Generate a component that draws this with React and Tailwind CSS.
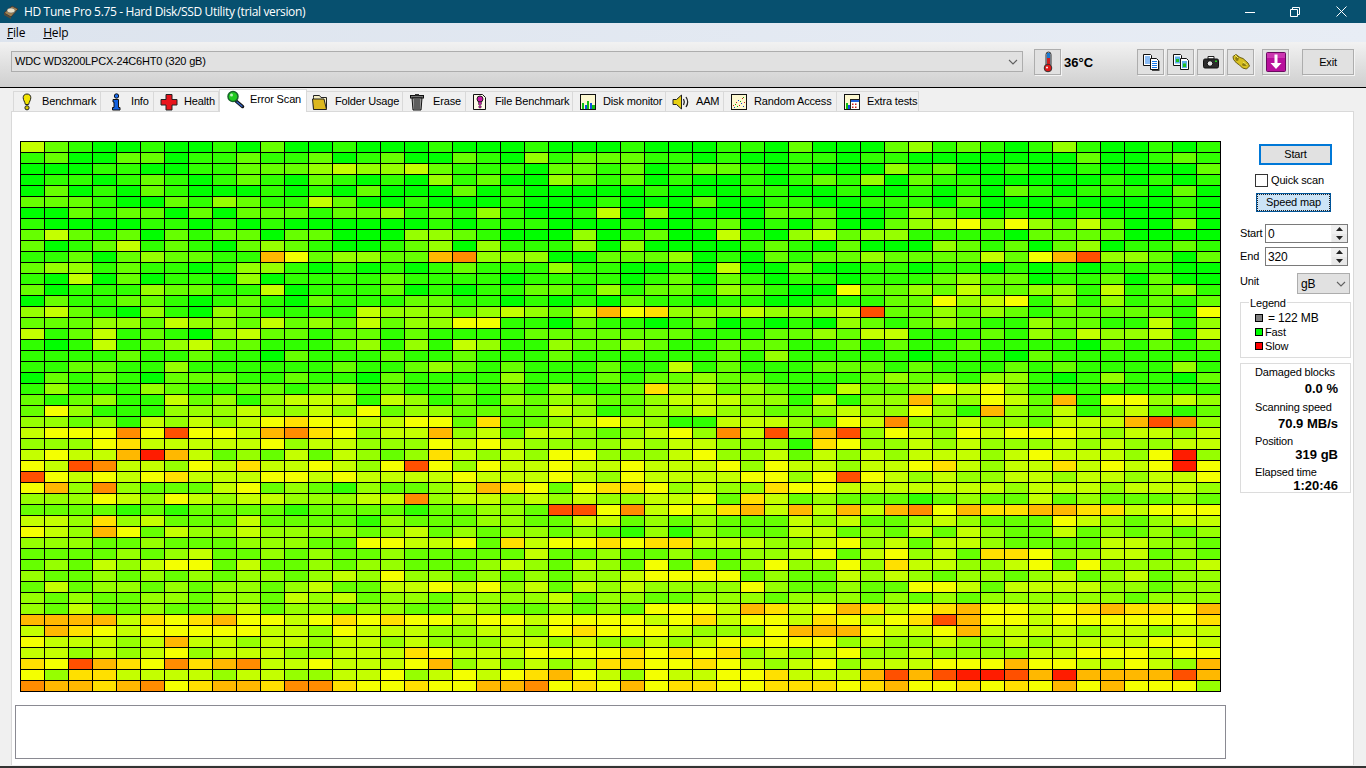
const ROWS = [
"42100100102001000100010001000110200023121013100101",
"12002201121120120021031222110100110110000000200121",
"00011001122234334211102212012210100031200100100002",
"01101210121021010312003212010010121302110000010101",
"02010210001010200020100000100011001001010210111020",
"22210021321142001000100010002001100111020001000010",
"00212202022212231213100140300002220013210100100010",
"10000110101000000101110001001201020023453532420030",
"24212021220220003321000301200410342331111022220000",
"20124121023210012303111303000012102000321202301121",
"11202322117523322783330022230102122322224257933202",
"23312110133101010121113110010400200110110101011100",
"10402011030111121111011110120210110111232201120200",
"20111322114011120101122131221321005223242233141231",
"02112210121021112211010102110110011122534513131212",
"34210310321111433323432475633343334922323212222215",
"22233243324232423355110211012010103212321132211413",
"41241210342212212111122222221112232441112132433414",
"10141234221112313143113223211222112121121111021212",
"11112112110211121121112111111213111110111021111111",
"11221131111112112321211121141211122212111212111131",
"02121022211211021111311121223221111232213310131102",
"13111321122123121121213112634232114223545311111111",
"21231142313444143121323322344433141337335427155343",
"25311133343343523322224312334332234335317324134212",
"33231434345655445526223454311444325483343324447983",
"45558595547865344734244323453849379354354555434434",
"33356444445344333545433334344333165334343334343344",
"45447a742324243236434355333453342434344434544435a3",
"549844354644543595354454454445354434456434464545a5",
"95454564445545444454445435444455359543433443443445",
"57383222452321322347652566534336554444444344434443",
"33354354344333448344343433445264232221232242322232",
"22221212222122221223329958454674747478576677664555",
"44363422242222132223322442323222434223432225432344",
"54375243343333234232332321313222442324243224232323",
"33322322233322554452645565664443345342443222244332",
"22223234223232232222242232232233452453426653344232",
"23243455242232332223432432526235335364433452533334",
"32232323233234353323232334555523224343233234234233",
"24233232332342244545342434333353223225542444433233",
"32322332332434233233334233223332333232323333332333",
"32422322342332332243223232555476457645675545676657",
"77774656755456565545545555456455465456975545555556",
"47654555554435444334435655543335777544574444344344",
"54443474434434434333443433434555553433433434444554",
"44343453444334446544455556565634345334333344555455",
"65976586784454445734343466556543453444555755445437",
"5366444434433445345456754" + "35445564447979aa97a777797",
"87767856776886556557785657566556665675565657575553",
];

const HEAT = {
  0: "bg-[#00ff00]", 1: "bg-[#30ff00]", 2: "bg-[#66ff00]", 3: "bg-[#96ff00]",
  4: "bg-[#c4ff00]", 5: "bg-[#f4ff00]", 6: "bg-[#ffe000]", 7: "bg-[#ffb800]",
  8: "bg-[#ff8c00]", 9: "bg-[#ff5000]", a: "bg-[#ff1c00]",
};

const Ui = "font-['Liberation_Sans',sans-serif]";

const Bulb = () => (
  <svg width="18" height="18" viewBox="0 0 18 18">
    <path d="M9 1C6.500 1 5.200 2.500 5.200 4.700c0 2.300 1.600 4 2.200 6.800h3.200c.6-2.800 2.200-4.500 2.200-6.800C12.800 2.500 11.500 1 9 1z" fill="#f2e400" stroke="#222" />
    <circle cx="9" cy="14.800" r="2.100" fill="#d8c800" stroke="#222" />
  </svg>
);
const InfoI = () => (
  <svg width="18" height="18" viewBox="0 0 18 18">
    <circle cx="9.500" cy="3" r="2.200" fill="#1a6cf0" stroke="#111" />
    <path d="M6 6.500h5.500v8H13V17H5.500v-2.500H7V9H6z" fill="#1060e0" stroke="#111" />
  </svg>
);
const Cross = () => (
  <svg width="18" height="18" viewBox="0 0 18 18">
    <path d="M6 1.500h6v5h5v5.500h-5v5H6v-5H1V6.500h5z" fill="#e8141c" stroke="#222" />
  </svg>
);
const Lens = () => (
  <svg width="20" height="20" viewBox="0 0 20 20">
    <path d="M10 11l6.500 5.500" stroke="#111" strokeWidth="3.500" strokeLinecap="round" />
    <path d="M11 12l5 4.200" stroke="#3060c0" strokeWidth="1.500" strokeLinecap="round" />
    <circle cx="7" cy="6.500" r="5" fill="#20cc20" stroke="#17632a" strokeWidth="1.500" />
    <circle cx="5.500" cy="5" r="1.500" fill="#b8f4b8" />
  </svg>
);
const Folder = () => (
  <svg width="18" height="18" viewBox="0 0 18 18">
    <path d="M2.500 4.500V2.500h6l1.500 2h5.500V15.500H2.500z" fill="#f3ecc0" stroke="#222" />
    <path d="M1.500 6H13l2.500 10.500H2.500z" fill="#dcb81e" stroke="#222" />
  </svg>
);
const Trash = () => (
  <svg width="18" height="18" viewBox="0 0 18 18">
    <rect x="2.500" y="2.500" width="13" height="2.500" fill="#777" stroke="#111" />
    <rect x="7" y="1" width="4" height="1.500" fill="#333" />
    <path d="M4 5h10l-1 12H5z" fill="#9a9a9a" stroke="#111" />
    <path d="M7 6v10M9 6v10M11 6v10" stroke="#222" />
  </svg>
);
const DocMark = () => (
  <svg width="18" height="18" viewBox="0 0 18 18">
    <path d="M2.500 1.500h9l3 3v12h-12z" fill="#fdfbe8" stroke="#111" />
    <circle cx="9" cy="6" r="3" fill="#c818a8" stroke="#222" />
    <rect x="7.500" y="9" width="3" height="2.500" fill="#c818a8" stroke="#222" strokeWidth=".500" />
    <circle cx="9" cy="13.800" r="1.300" fill="#c818a8" stroke="#222" strokeWidth=".500" />
  </svg>
);
const Monitor = () => (
  <svg width="18" height="18" viewBox="0 0 18 18">
    <rect x="1.500" y="1.500" width="15" height="15" fill="#fdf8d0" stroke="#111" />
    <path d="M3 10h2v6H3z" fill="#10c010" />
    <path d="M6 12h2v4H6z" fill="#1050e0" />
    <path d="M8 8h2v8H8z" fill="#10c010" />
    <path d="M11 10h2v6h-2z" fill="#1050e0" />
    <path d="M13 12h3v4h-3z" fill="#10c010" />
  </svg>
);
const Speaker = () => (
  <svg width="20" height="18" viewBox="0 0 20 18">
    <path d="M2 6.500h3.500L10.500 2v14l-5-4.500H2z" fill="#e8d010" stroke="#222" />
    <path d="M12.500 6c1 1.800 1 4.200 0 6M15 4c2 3 2 7 0 10" fill="none" stroke="#222" strokeWidth="1.300" />
  </svg>
);
const Dots = () => (
  <svg width="18" height="18" viewBox="0 0 18 18">
    <rect x="1.500" y="1.500" width="15" height="15" fill="#fdf8d0" stroke="#111" />
    <g fill="#d01818">
      <rect x="3" y="12" width="1" height="1" /><rect x="6" y="9" width="1" height="1" /><rect x="9" y="12" width="1" height="1" /><rect x="12" y="5" width="1" height="1" /><rect x="14" y="9" width="1" height="1" />
    </g>
    <g fill="#1040d0">
      <rect x="4" y="14" width="1" height="1" /><rect x="8" y="7" width="1" height="1" /><rect x="11" y="10" width="1" height="1" /><rect x="13" y="13" width="1" height="1" />
    </g>
    <g fill="#10a010">
      <rect x="5" y="11" width="1" height="1" /><rect x="10" y="8" width="1" height="1" /><rect x="13" y="4" width="1" height="1" /><rect x="7" y="13" width="1" height="1" />
    </g>
  </svg>
);
const Extra = () => (
  <svg width="18" height="18" viewBox="0 0 18 18">
    <rect x="1.500" y="1.500" width="15" height="15" fill="#fdf8d0" stroke="#111" />
    <path d="M3 10h2v6H3z" fill="#10c010" />
    <path d="M5 12h2v4H5z" fill="#1050e0" />
    <rect x="7.500" y="6.500" width="9" height="10" fill="#fff" stroke="#222" />
    <rect x="8" y="7" width="8" height="2" fill="#2060e0" />
    <g fill="#d02020"><rect x="9" y="10.500" width="1.500" height="1.500" /><rect x="12" y="10.500" width="1.500" height="1.500" /><rect x="9" y="13.500" width="1.500" height="1.500" /><rect x="12" y="13.500" width="1.500" height="1.500" /></g>
  </svg>
);
const Thermo = () => (
  <svg width="18" height="22" viewBox="0 0 18 22">
    <rect x="7" y="1" width="5" height="15" rx="2.500" fill="#b8c8d8" stroke="#333" />
    <rect x="8" y="2" width="3" height="5" fill="#1878d0" />
    <rect x="8" y="7" width="3" height="9" fill="#d02020" />
    <circle cx="9" cy="17" r="3.800" fill="#e01818" stroke="#333" />
    <circle cx="8" cy="16.500" r="1" fill="#fff" />
  </svg>
);
const CopyText = () => (
  <svg width="18" height="18" viewBox="0 0 18 18">
    <path d="M1.500 1.500h7l1 1v10h-8z" fill="#fff" stroke="#111" />
    <path d="M3 4h5M3 6h5M3 8h5M3 10h5" stroke="#1878e8" />
    <path d="M9 6h6l1.500 1.500v9.500H9z" fill="#444" transform="translate(1 1)" />
    <path d="M8.500 5.500h6l2 2v9h-8z" fill="#fff" stroke="#111" />
    <path d="M10 8.500h5M10 10.500h5M10 12.500h5M10 14.500h5" stroke="#1878e8" />
  </svg>
);
const CopyImg = () => (
  <svg width="18" height="18" viewBox="0 0 18 18">
    <path d="M1.500 1.500h7l1 1v10h-8z" fill="#fff" stroke="#111" />
    <rect x="3" y="3.500" width="5" height="7" fill="#60b0e8" />
    <rect x="4" y="6" width="3" height="3" fill="#20c020" />
    <path d="M8.500 5.500h6l2 2v9h-8z" fill="#fff" stroke="#111" />
    <rect x="10" y="8" width="5" height="7" fill="#60b0e8" />
    <rect x="11" y="10.500" width="3" height="3.500" fill="#20c020" />
  </svg>
);
const Camera = () => (
  <svg width="18" height="18" viewBox="0 0 18 18">
    <path d="M6 3.500h6v2.500H6z" fill="#fff" stroke="#222" />
    <rect x="1.500" y="6" width="15" height="9" rx="1.500" fill="#2c2c2c" stroke="#111" />
    <circle cx="8" cy="10.500" r="2.800" fill="#e8e8e8" stroke="#111" />
    <rect x="13" y="7.500" width="2" height="1.500" fill="#20d020" />
  </svg>
);
const Keys = () => (
  <svg width="20" height="18" viewBox="0 0 20 18">
    <path d="M2 3.500l3-2 4 3 3 1 5 4.500 1.500 3-3 3-4-1-3-3-3-2-3-3.500z" fill="#d8c020" stroke="#6a5c10" />
    <ellipse cx="6" cy="5.500" rx="1.700" ry="2.500" fill="#8a7a10" />
    <ellipse cx="13.500" cy="11.500" rx="2.500" ry="1.500" fill="#8a7a10" />
    <path d="M4 2l3 3M12 9l4 3" stroke="#f4e860" />
  </svg>
);
const Download = () => (
  <svg width="20" height="20" viewBox="0 0 20 20">
    <rect x=".500" y=".500" width="19" height="19" rx="1" fill="#b8109c" stroke="#6a0a60" />
    <path d="M1 1h18v5H1z" fill="#d850c0" opacity=".600" />
    <path d="M8.500 2.500h3v8.500h4L10 17 4.500 11h4z" fill="#fff" />
  </svg>
);
const AppIcon = () => (
  <svg width="16" height="16" viewBox="0 0 16 16">
    <path d="M1 9l8-7 6 3-7 8z" fill="#a08050" stroke="#3a3a3a" />
    <ellipse cx="8" cy="6.500" rx="4" ry="2.500" fill="#e8e0c8" stroke="#555" strokeWidth=".500" />
    <path d="M1 9l7 4v2l-7-4z" fill="#554a3a" />
  </svg>
);

const TABS = [
  { label: "Benchmark", icon: <Bulb />, c: "w-[88px] pl-[4px]", iw: "w-[24px]" },
  { label: "Info", icon: <InfoI />, c: "w-[53px] pl-[6px]", iw: "w-[24px]" },
  { label: "Health", icon: <Cross />, c: "w-[65px] pl-[6px]", iw: "w-[24px]" },
  { label: "Error Scan", icon: <Lens />, c: "w-[88px] pl-[6px]", iw: "w-[24px]", active: true },
  { label: "Folder Usage", icon: <Folder />, c: "w-[96px] pl-[4px]", iw: "w-[24px]" },
  { label: "Erase", icon: <Trash />, c: "w-[63px] pl-[5px]", iw: "w-[25px]" },
  { label: "File Benchmark", icon: <DocMark />, c: "w-[107px] pl-[5px]", iw: "w-[24px]" },
  { label: "Disk monitor", icon: <Monitor />, c: "w-[93px] pl-[6px]", iw: "w-[24px]" },
  { label: "AAM", icon: <Speaker />, c: "w-[58px] pl-[5px]", iw: "w-[25px]" },
  { label: "Random Access", icon: <Dots />, c: "w-[113px] pl-[6px]", iw: "w-[24px]" },
  { label: "Extra tests", icon: <Extra />, c: "w-[82px] pl-[6px]", iw: "w-[24px]" },
];

function ToolBtn({ children, className = "" }) {
  return (
    <div className={`mt-[7px] flex h-[26px] w-[27px] items-center justify-center border border-[#adadad] bg-[#e1e1e1] shadow-[1px_1px_0_#f4f4f4] ${className}`}>
      {children}
    </div>
  );
}

function Spin({ label, value, className }) {
  return (
    <div className={`ml-[12px] flex h-[19px] w-[108px] items-center ${className}`}>
      <span className="-mt-[2px] w-[25px] leading-[14px]">{label}</span>
      <div className="flex h-[19px] w-[83px] border border-[#7a7a7a] bg-white">
        <span className="flex-1 pl-[2px] text-[12px] leading-[19px]">{value}</span>
        <div className="flex w-[16px] flex-col border-l border-[#f0f0f0] bg-[#f0f0f0]">
          <div className="flex h-[8px] items-center justify-center">
            <svg width="7" height="4" viewBox="0 0 7 4"><path d="M3.500 0L7 4H0z" fill="#222" /></svg>
          </div>
          <div className="mt-[1px] flex h-[8px] items-center justify-center bg-[#e8e8e8]">
            <svg width="7" height="4" viewBox="0 0 7 4"><path d="M0 0h7L3.500 4z" fill="#222" /></svg>
          </div>
        </div>
      </div>
    </div>
  );
}

const Chevron = () => (
  <svg width="10" height="6" viewBox="0 0 10 6"><path d="M1 1l4 4 4-4" fill="none" stroke="#606060" strokeWidth="1.100" /></svg>
);

export default function App() {
  return (
    <div className={`${Ui} flex h-[768px] w-[1366px] flex-col overflow-hidden bg-[#f0f0f0] text-[11px] tracking-[-0.15px] text-black`}>
      {/* title bar */}
      <div className="flex h-[23px] items-center bg-[#07506f] text-white">
        <div className="ml-[3px] w-[21px]"><AppIcon /></div>
        <span className="font-['Open_Sans',sans-serif] text-[12px] tracking-[-0.35px]">HD Tune Pro 5.75 - Hard Disk/SSD Utility (trial version)</span>
        <div className="ml-auto flex h-[23px] items-center">
          <svg className="mr-[35px]" width="10" height="10" viewBox="0 0 10 10"><path d="M0 5.500h10" stroke="#fff" /></svg>
          <svg className="mr-[36px]" width="10" height="10" viewBox="0 0 10 10"><path d="M.500 2.500h7v7h-7zM2.500 2.500v-2h7v7h-2" fill="none" stroke="#fff" /></svg>
          <svg className="mr-[19px]" width="11" height="11" viewBox="0 0 11 11"><path d="M.500.500l10 10M10.500.500l-10 10" stroke="#fff" /></svg>
        </div>
      </div>
      {/* menu */}
      <div className="flex h-[19px] items-center gap-[18px] bg-gradient-to-r from-[#dde4ee] to-[#e8edf5] pl-[7px] font-['Open_Sans',sans-serif] text-[12px] tracking-[-0.2px]">
        <span><span className="underline">F</span>ile</span>
        <span><span className="underline">H</span>elp</span>
      </div>
      {/* toolbar */}
      <div className="flex h-[45px] items-start bg-gradient-to-b from-[#f2f2f2] to-[#cfcfcf]">
        <div className="ml-[11px] mt-[9px] flex h-[21px] w-[1012px] items-center border border-[#adadad] bg-[#e1e1e1] pl-[3px] pr-[4px]">
          <span className="flex-1 tracking-[-0.2px]">WDC WD3200LPCX-24C6HT0 (320 gB)</span>
          <Chevron />
        </div>
        <ToolBtn className="ml-[11px]"><Thermo /></ToolBtn>
        <span className="ml-[3px] mt-[13px] w-[73px] text-[13px] font-bold leading-[15px] tracking-normal">36°C</span>
        <ToolBtn><CopyText /></ToolBtn>
        <ToolBtn className="ml-[3px]"><CopyImg /></ToolBtn>
        <ToolBtn className="ml-[3px]"><Camera /></ToolBtn>
        <ToolBtn className="ml-[3px]"><Keys /></ToolBtn>
        <ToolBtn className="ml-[8px]"><Download /></ToolBtn>
        <div className="ml-[13px] mt-[7px] flex h-[26px] w-[52px] items-center justify-center border border-[#adadad] bg-[#e1e1e1] shadow-[1px_1px_0_#f4f4f4]">Exit</div>
      </div>
      <div className="h-px bg-black" />
      {/* tabs */}
      <div className="flex h-[23px] items-end pl-[13px]">
        {TABS.map((t) => (
          <div
            key={t.label}
            className={`flex items-center border-r border-[#d9d9d9] ${t.c} ${
              t.active
                ? "relative z-10 -mb-px h-[23px] border-l border-t bg-white pb-[3px]"
                : "h-[20px] border-t bg-[#f0f0f0] first:border-l"
            }`}
          >
            <span className={`flex shrink-0 items-center justify-start ${t.iw}`}>{t.icon}</span>
            <span className="whitespace-nowrap">{t.label}</span>
          </div>
        ))}
      </div>
      {/* panel */}
      <div className="ml-[11px] flex h-[654px] w-[1343px] border-x border-t border-[#d9d9d9] bg-white">
        <div className="w-[1216px]">
          <div className="ml-[8px] mt-[29px] grid w-[1201px] grid-cols-[repeat(50,23px)] gap-px bg-black p-px">
            {ROWS.flatMap((r, y) => r.split("").map((c, x) => <div key={y * 50 + x} className={`h-[10px] ${HEAT[c]}`} />))}
          </div>
          <div className="ml-[3px] mt-[13px] h-[54px] w-[1211px] border border-[#8a8a92] bg-white" />
        </div>
        <div className="flex-1 whitespace-nowrap">
          <div className="ml-[31px] mt-[32px] flex h-[21px] w-[73px] items-center justify-center border-2 border-[#0078d7] bg-[#e1e1e1]">Start</div>
          <div className="ml-[27px] mt-[9px] flex h-[13px] items-center">
            <div className="h-[13px] w-[13px] border border-[#333] bg-white" />
            <span className="ml-[3px]">Quick scan</span>
          </div>
          <div className="ml-[28px] mt-[6px] flex h-[19px] w-[75px] items-center justify-center border border-[#005499] bg-[#cce4f7] outline-1 -outline-offset-2 outline-dotted outline-[#222]">Speed map</div>
          <Spin label="Start" value="0" className="mt-[12px]" />
          <Spin label="End" value="320" className="mt-[4px]" />
          <div className="ml-[12px] mt-[7px] flex h-[21px] w-[110px] items-center">
            <span className="-mt-[4px] w-[57px]">Unit</span>
            <div className="flex h-[21px] w-[53px] items-center border border-[#adadad] bg-[#e1e1e1] pl-[3px] pr-[3px]">
              <span className="flex-1 text-[12px]">gB</span>
              <Chevron />
            </div>
          </div>
          <div className="relative ml-[12px] mt-[8px] h-[56px] w-[111px] border border-[#dcdcdc] pl-[14px] pt-[8px]">
            <span className="absolute -top-[7px] left-[8px] bg-white px-px leading-[14px]">Legend</span>
            <div className="flex h-[14px] items-center">
              <div className="h-[8px] w-[8px] border border-black bg-[#808080]" />
              <span className="ml-[5px] text-[12px]">= 122 MB</span>
            </div>
            <div className="flex h-[14px] items-center">
              <div className="h-[8px] w-[8px] border border-black bg-[#00ff00]" />
              <span className="ml-[2px]">Fast</span>
            </div>
            <div className="flex h-[14px] items-center">
              <div className="h-[8px] w-[8px] border border-black bg-[#ff0000]" />
              <span className="ml-[2px]">Slow</span>
            </div>
          </div>
          <div className="ml-[12px] mt-[5px] h-[130px] w-[111px] border border-[#dcdcdc] pl-[14px] pr-[12px] pt-px leading-[14px]">
            <div>Damaged blocks</div>
            <div className="mt-[3px] text-right text-[13px] font-bold tracking-normal">0.0 %</div>
            <div className="mt-[4px]">Scanning speed</div>
            <div className="mt-[3px] text-right text-[13px] font-bold tracking-normal">70.9 MB/s</div>
            <div className="mt-[3px]">Position</div>
            <div className="text-right text-[13px] font-bold tracking-normal">319 gB</div>
            <div className="mt-[3px]">Elapsed time</div>
            <div className="text-right text-[13px] font-bold tracking-normal">1:20:46</div>
          </div>
        </div>
      </div>
      <div className="mt-auto h-[2px] bg-[#333]" />
    </div>
  );
}
